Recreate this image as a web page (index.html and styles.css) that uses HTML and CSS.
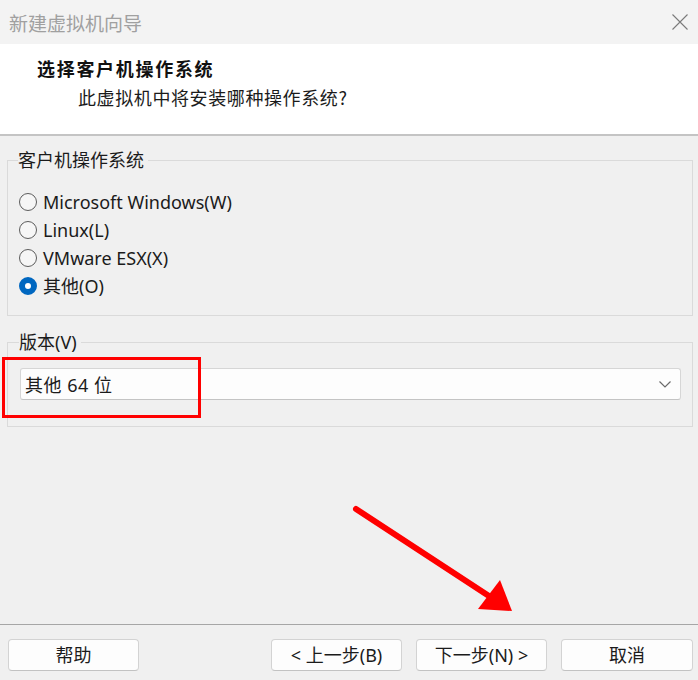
FILE: index.html
```html
<!DOCTYPE html>
<html lang="zh-CN">
<head>
<meta charset="utf-8">
<title>新建虚拟机向导</title>
<link rel="stylesheet" href="styles.css">
</head>
<body>
<div class="window">
  <div class="titlebar">
    <span class="title">新建虚拟机向导</span>
    <svg class="close" width="16" height="16" viewBox="0 0 16 16"><path d="M0.5 0.5 L15.5 15.5 M15.5 0.5 L0.5 15.5" stroke="#7a7a7a" stroke-width="1.1" fill="none"/></svg>
  </div>
  <div class="header">
    <div class="heading">选择客户机操作系统</div>
    <div class="subheading">此虚拟机中将安装哪种操作系统?</div>
  </div>
  <div class="content">
    <fieldset class="group group-os">
      <legend>客户机操作系统</legend>
      <label class="radio"><span class="dot"></span>Microsoft Windows(W)</label>
      <label class="radio"><span class="dot"></span>Linux(L)</label>
      <label class="radio"><span class="dot"></span>VMware ESX(X)</label>
      <label class="radio checked"><span class="dot"></span>其他(O)</label>
    </fieldset>
    <fieldset class="group group-ver">
      <legend>版本(V)</legend>
      <div class="select">
        <span>其他 64 位</span>
        <svg class="chev" width="12" height="7" viewBox="0 0 12 7"><path d="M0.5 0.5 L6 6 L11.5 0.5" stroke="#6a6a6a" stroke-width="1.2" fill="none"/></svg>
      </div>
    </fieldset>
    <div class="mark-box"></div>
    <svg class="mark-arrow" width="180" height="120" viewBox="0 0 180 120">
      <path d="M6 5 L142 94" stroke="#ff0000" stroke-width="6" stroke-linecap="round" fill="none"/>
      <path d="M162 107 L128 105 L150 76 Z" fill="#ff0000"/>
    </svg>
  </div>
  <div class="footer">
    <button class="btn">帮助</button>
    <div class="spacer"></div>
    <button class="btn">&lt; 上一步(B)</button>
    <button class="btn">下一步(N) &gt;</button>
    <button class="btn btn-cancel">取消</button>
  </div>
</div>
</body>
</html>
```
FILE: styles.css
```css
html, body {
  margin: 0;
  padding: 0;
}
body {
  width: 698px;
  height: 680px;
  overflow: hidden;
  background: #f0f0f0;
  font-family: "Noto Sans", "Noto Sans CJK SC", sans-serif;
  font-size: 18px;
  color: #1b1b1b;
}
.window {
  display: flex;
  flex-direction: column;
  height: 680px;
}
.titlebar {
  height: 44px;
  background: #f3f3f3;
  display: flex;
  align-items: center;
  justify-content: space-between;
  padding: 0 10px 0 9px;
  box-sizing: border-box;
}
.title {
  color: #a0a0a0;
  font-size: 19px;
  font-family: "Noto Sans CJK SC", sans-serif;
}
.close {
  display: block;
}
.header {
  height: 92px;
  box-sizing: border-box;
  background: #ffffff;
  border-bottom: 2px solid #c4c4c4;
  padding-top: 11px;
}
.heading {
  font-family: "Noto Sans CJK SC", sans-serif;
  font-weight: bold;
  font-size: 18px;
  line-height: 26px;
  padding-left: 37px;
  letter-spacing: 1.7px;
  color: #111;
}
.subheading {
  font-family: "Noto Sans CJK SC", sans-serif;
  font-size: 18px;
  line-height: 26px;
  margin-top: 3px;
  padding-left: 78px;
  letter-spacing: 0.6px;
  color: #1b1b1b;
}
.content {
  flex: 1;
  position: relative;
  padding: 10px 5px 0 7px;
}
.group {
  margin: 0;
  border: 1px solid #dadada;
  padding: 0 0 0 11px;
}
.group legend {
  padding: 0 4px 0 0;
  margin-left: -1px;
  line-height: 28px;
  font-size: 18px;
}
.group-os {
  height: 170px;
  box-sizing: border-box;
  padding-top: 14px;
}
.radio {
  display: flex;
  align-items: center;
  height: 28px;
  line-height: 28px;
}
.dot {
  width: 18px;
  height: 18px;
  border: 1px solid #5c5c5c;
  border-radius: 50%;
  box-sizing: border-box;
  background: #f6f6f6;
  margin-right: 6px;
  flex: none;
}
.radio.checked .dot {
  background: #ffffff;
  border: 6px solid #0067c0;
}
.group-ver {
  margin-top: 12px;
  height: 99px;
  box-sizing: border-box;
  padding: 12px 11px 0 12px;
}
.select {
  height: 32px;
  box-sizing: border-box;
  background: #fdfdfd;
  border: 1px solid #d6d6d6;
  border-bottom-color: #c4c4c4;
  border-radius: 3px;
  display: flex;
  align-items: center;
  justify-content: space-between;
  padding: 0 9px 0 4px;
}
.select span {
  letter-spacing: 0.5px;
}
.chev {
  display: block;
}
.mark-box {
  position: absolute;
  left: 2px;
  top: 221px;
  width: 199px;
  height: 61px;
  border: 3px solid #ff0000;
  box-sizing: border-box;
}
.mark-arrow {
  position: absolute;
  left: 350px;
  top: 368px;
}
.footer {
  border-top: 1px solid #a6a6a6;
  display: flex;
  align-items: flex-start;
  gap: 14px;
  padding: 14px 5px 0 8px;
  height: 56px;
  box-sizing: border-box;
}
.spacer {
  flex: 1;
}
.btn {
  width: 131px;
  height: 32px;
  background: #fdfdfd;
  border: 1px solid #d3d3d3;
  border-bottom-color: #c2c2c2;
  border-radius: 4px;
  font-family: "Noto Sans", "Noto Sans CJK SC", sans-serif;
  font-size: 18px;
  color: #1b1b1b;
  padding: 0;
  line-height: 28px;
}
.btn-cancel {
  width: 132px;
}
```
